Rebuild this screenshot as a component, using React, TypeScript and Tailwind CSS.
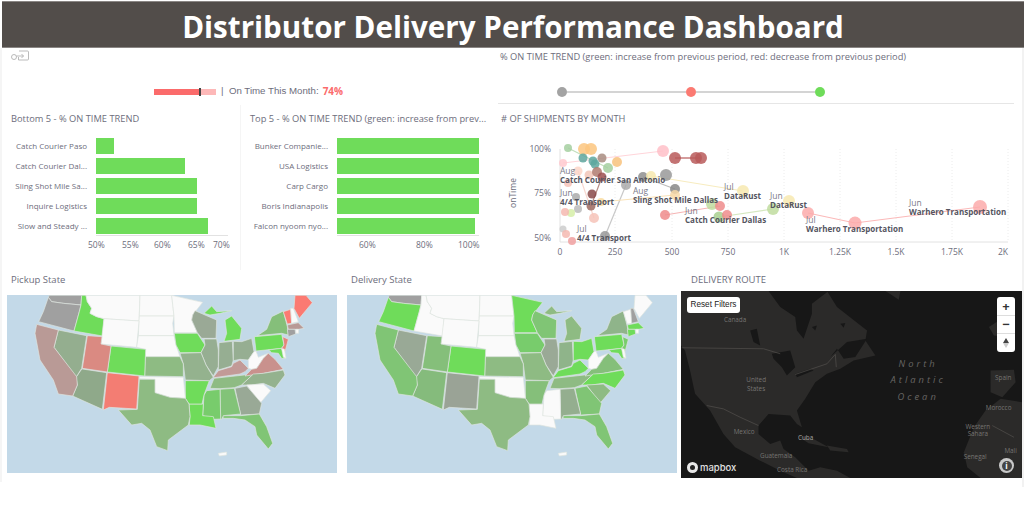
import React from "react";

const G = "#6fdc5a";
const W = "#fafafa";
const GRAY = "#a0a0a0";
const RED = "#fb7a72";

// outlines in a 990x532 space, same for both state maps
const STATES: Record<string, string> = {
  WA: "148,76 245,76 243,105 190,100 155,95 145,82",
  OR: "145,82 155,95 190,100 243,105 238,125 222,183 116,155 130,125",
  ID: "245,76 258,76 262,95 275,115 270,130 290,140 312,146 308,198 222,183 238,125 243,105",
  MT: "258,76 420,76 417,153 312,146 290,140 270,130 275,115 262,95",
  ND: "420,76 515,76 522,138 418,138",
  SD: "418,138 522,138 518,160 522,197 415,197 417,153",
  WY: "312,146 417,153 410,232 303,222",
  NE: "415,197 522,197 528,225 540,260 436,260 437,238 410,232",
  MN: "515,76 608,97 578,135 575,150 592,188 523,188 522,138",
  IA: "523,190 592,190 615,225 603,248 540,248 528,225",
  WI: "585,122 615,135 650,150 648,205 605,205 592,188 575,150 578,135",
  MIU: "612,130 635,108 650,125 695,122 660,130 630,135",
  MI: "675,150 695,138 725,175 720,208 672,214 680,190",
  IL: "612,207 650,207 655,240 655,290 640,318 618,285 603,248 615,225",
  IN: "657,218 697,214 700,270 695,288 655,300",
  OH: "700,214 725,215 755,205 762,245 745,270 720,268 700,272",
  KY: "640,322 655,302 695,290 700,280 720,270 745,295 735,305 720,312 642,323",
  TN: "630,355 642,325 760,312 725,345 703,353 660,356",
  WV: "745,295 745,270 762,245 768,243 775,262 805,250 790,265 770,295 755,298",
  VA: "735,318 755,298 770,295 790,265 805,250 825,268 850,298 790,310",
  NC: "725,345 760,312 790,310 850,300 855,315 825,355 790,340 755,345",
  SC: "740,345 790,342 812,362 780,400",
  GA: "705,355 740,348 785,400 778,432 722,435",
  FL: "668,437 722,437 778,432 800,470 818,520 805,537 770,495 765,470 735,450 700,445 670,445",
  AL: "660,358 703,355 722,432 670,437 665,448 662,447",
  MS: "620,362 660,358 662,447 640,448 608,437 612,375",
  LA: "567,402 610,402 608,437 640,440 648,475 600,465 568,465 570,440",
  AR: "556,332 628,332 612,375 606,402 567,402 556,385",
  MO: "540,250 603,248 618,285 640,322 628,332 556,330 550,282",
  KS: "436,260 540,260 550,282 550,320 434,318",
  OK: "418,320 550,322 556,385 510,382 465,368 465,328 418,326",
  TX: "418,328 465,328 465,368 510,382 556,385 567,402 570,440 565,465 505,510 503,542 470,530 450,480 425,460 395,465 355,420 412,418",
  NM: "322,308 417,318 410,417 328,412 310,420",
  AZ: "247,297 320,308 307,418 218,378 232,345 228,322 243,300",
  CO: "333,228 437,238 434,318 322,306",
  UT: "262,197 306,200 303,222 333,228 322,306 247,295",
  NV: "175,180 260,197 245,295 228,322 162,232",
  CA: "110,163 175,180 162,232 230,320 232,345 218,378 175,372 160,330 120,270 105,190",
  PA: "763,200 845,193 852,225 845,235 768,243",
  NY: "772,197 800,178 815,140 850,123 862,170 865,195 845,190",
  NJ: "848,200 865,208 855,245 845,235 852,225",
  MD: "806,240 845,235 855,265 845,265 835,250 815,248",
  DE: "845,236 853,237 858,265 850,262",
  VT: "850,125 872,118 875,160 862,162",
  NH: "872,115 880,115 895,155 875,160",
  ME: "885,76 918,76 937,98 898,145 882,115",
  MA: "862,165 895,158 912,175 895,178 865,178",
  CT: "862,178 885,178 887,192 865,200",
  RI: "887,178 896,178 896,190 888,190",
  PR: "655,550 680,546 680,555 658,558",
};

const PICKUP: Record<string, string> = {
  WA: GRAY, OR: GRAY, ID: G, MT: W, ND: W, SD: W, WY: W, NE: W, MN: W, IA: G, WI: "#9aa996", MIU: G, MI: G,
  IL: "#96ae92", IN: "#96ae92", OH: "#96ae92", KY: "#c29a97", TN: "#8ebb83", WV: W, VA: "#c9918d", NC: "#94b28e",
  SC: W, GA: "#99a996", FL: "#80c575", AL: "#82c378", MS: "#78cc6c", LA: G, AR: G, MO: "#94b28e", KS: "#8ebb83",
  OK: W, TX: "#8ebb83", NM: "#f37d73", AZ: "#8fa98a", CO: G, UT: "#da8a82", NV: "#94ae8f", CA: "#b99a96", PA: G,
  NY: "#85bf7a", NJ: "#e4857c", MD: G, DE: W, VT: RED, NH: W, ME: RED, MA: "#b89a96", CT: GRAY, RI: W, PR: W,
};

const DELIVERY: Record<string, string> = {
  WA: GRAY, OR: G, ID: W, MT: W, ND: W, SD: W, WY: W, NE: W, MN: G, IA: "#78cc6c", WI: "#80c575", MIU: "#8ebb83",
  MI: "#8ebb83", IL: "#9aa996", IN: "#8fb48a", OH: G, KY: G, TN: "#8ebb83", WV: W, VA: "#85bf7a", NC: G, SC: "#8ebb83",
  GA: "#80c575", FL: "#80c575", AL: "#94ae8f", MS: W, LA: W, AR: "#85bf7a", MO: "#8ebb83", KS: "#8ebb83", OK: W,
  TX: "#8ebb83", NM: "#9aa396", AZ: "#85bb7c", CO: G, UT: "#85bf7a", NV: "#99a996", CA: "#80c575", PA: G,
  NY: "#8fb48a", NJ: "#78cc6c", MD: G, DE: W, VT: W, NH: GRAY, ME: W, MA: G, CT: G, RI: W, PR: W,
};

const BOTTOM5 = [
  { name: "Catch Courier Paso", w: 17.5 },
  { name: "Catch Courier Dal...", w: 89 },
  { name: "Sling Shot Mile Sa...", w: 101 },
  { name: "Inquire Logistics", w: 101 },
  { name: "Slow and Steady ...", w: 112 },
];

const TOP5 = [
  { name: "Bunker Companie...", w: 142 },
  { name: "USA Logistics", w: 142 },
  { name: "Carp Cargo", w: 142 },
  { name: "Boris Indianapolis", w: 142 },
  { name: "Falcon nyoom nyo...", w: 138 },
];

// [x, y, r, fill]
const DOTS: [number, number, number, string][] = [
  [663, 151, 6, "#ffc0c8"], [563, 163, 4, "#ffc9cf"], [584, 149, 6, "#fbc67f"], [591, 149, 6, "#fbc67f"],
  [617, 162, 5, "#f8c27c"], [568, 148, 4, "#a5cfa0"], [578, 171, 4.5, "#fbd5c8"], [589, 175, 4.5, "#f2c5b8"],
  [568, 183, 4, "#f6c3b8"], [583, 158, 4.5, "#5ea79f"], [593, 161, 4.5, "#5ea79f"], [595, 164, 4.5, "#5ea79f"],
  [602, 158, 4.5, "#a88c80"], [608, 168, 5, "#a5cfa0"], [597, 172, 5, "#b07a6e"], [602, 177, 4.5, "#9c4f4f"],
  [592, 194, 4.5, "#8a4a4a"], [591, 206, 4.5, "#9c6a60"], [675, 158, 6, "#b85a5a"], [696, 158, 6, "#b85a5a"],
  [701, 158, 6, "#b85a5a"], [643, 177, 5, "#8f8f8f"], [666, 175, 6, "#999999"], [675, 189, 5, "#888888"],
  [626, 185, 5, "#aaaaaa"], [605, 236, 5, "#999999"], [576, 197, 4, "#aaaaaa"], [578, 209, 4, "#bbbbbb"],
  [563, 229, 3.5, "#cccccc"], [651, 176, 5, "#f7e9b0"], [675, 195, 5, "#f8d9a8"], [743, 191, 6, "#f7e9b0"],
  [601, 202, 4, "#f9dca0"], [712, 204, 6, "#bfdc9f"], [719, 217, 5.5, "#a8cf8e"], [571, 213, 4, "#d6efa8"],
  [665, 215, 5, "#ef8c8c"], [720, 206, 5, "#ef8c8c"], [727, 215, 5, "#ef8c8c"], [594, 218, 5, "#f6c3b8"],
  [565, 212, 4, "#f4b8b0"], [566, 234, 4, "#f4b8b0"], [572, 241, 4, "#f0a0a0"], [789, 201, 6, "#f7e9b0"],
  [773, 209, 6, "#bfdc9f"], [808, 213, 6, "#fbaaaa"], [855, 223, 6.5, "#fbaaaa"], [980, 207, 7, "#fbaaaa"],
];

const LINES: [string, string][] = [
  ["563,163 663,151", "#ffd5da"], ["675,158 701,158", "#b85a5a"], ["643,177 675,189", "#bbbbbb"],
  ["626,185 605,236", "#c8c8c8"], ["651,176 743,191", "#f7ecc0"], ["601,202 675,195", "#f9e2b8"],
  ["719,217 773,209", "#d5e8c0"], ["665,215 720,206", "#f5b5b5"], ["808,213 855,223 980,207", "#fbb9b9"],
  ["568,148 608,168", "#c0dfbc"], ["602,177 591,206", "#b88c84"], ["578,171 594,218", "#f8d8d0"],
];

const LABELS: [number, number, string, string][] = [
  [560, 174, "Aug", "Catch Courier San Antonio"],
  [560, 196, "Jun", "4/4 Transport"],
  [633, 194, "Aug", "Sling Shot Mile Dallas"],
  [577, 232, "Jul", "4/4 Transport"],
  [724, 190, "Jul", "DataRust"],
  [685, 214, "Jun", "Catch Courier Dallas"],
  [770, 199, "Jun", "DataRust"],
  [806, 223, "Jul", "Warhero Transportation"],
  [909, 206, "Jun", "Warhero Transportation"],
];

function UsMap({ colors }: { colors: Record<string, string> }) {
  return (
    <svg viewBox="21 76 990 532" className="block w-[330px] h-[178px] bg-[#c3d9e8]">
      {Object.keys(STATES).map((k) => (
        <polygon key={k} points={STATES[k]} fill={colors[k]} stroke="#dfe6df" strokeWidth="2" strokeLinejoin="round" />
      ))}
    </svg>
  );
}

function BarChart({ rows, ticks }: { rows: { name: string; w: number }[]; ticks: React.ReactNode }) {
  return (
    <div className="flex flex-col mt-[12px]">
      <div className="flex flex-col gap-[4.5px]">
        {rows.map((r) => (
          <div key={r.name} className="flex items-center h-[15.5px]">
            <div className="w-[96px] text-right text-[8px] text-[#6d6d7c] whitespace-nowrap pr-[9px]">{r.name}</div>
            <div className="h-full bg-[#6fdc5a]" style={{ width: r.w }} />
          </div>
        ))}
      </div>
      {ticks}
    </div>
  );
}

function MapboxMap() {
  return (
    <svg viewBox="3 62 1021 560" className="block w-[341px] h-[187px] bg-[#171717]">
      <g fill="#2b2a29">
        <polygon points="3,62 440,62 470,110 560,180 555,210 585,255 520,270 480,295 440,310 405,335 375,385 350,420 365,470 350,460 330,435 265,430 235,465 235,490 270,520 300,510 310,535 345,560 385,600 420,590 470,600 510,622 350,622 300,600 240,570 165,530 130,490 90,420 45,370 30,300 15,240 3,225" />
        <polygon points="615,62 660,62 655,88 635,75" />
        <polygon points="350,495 400,505 445,530 385,518" />
        <polygon points="440,525 500,535 505,545 450,540" />
        <polygon points="930,300 1000,298 1005,335 965,380 930,365" />
        <polygon points="1024,395 960,385 915,420 880,470 850,545 860,590 900,622 1024,622" />
        <polygon points="925,170 955,150 975,200 940,195" />
      </g>
      <g fill="#171717">
        <polygon points="265,62 445,62 395,100 395,130 370,205 350,180 345,140 300,110" />
        <polygon points="275,250 330,240 345,290 320,315 305,290 280,265" />
        <polygon points="345,310 390,295 400,300 350,320" />
        <polygon points="450,260 500,215 560,205 525,260 490,265 470,235" />
        <polygon points="210,180 230,175 240,225 220,215" />
        <polygon points="395,170 410,165 405,180" />
        <polygon points="480,160 495,158 490,172" />
      </g>
      <g fill="none" stroke="#55524f" strokeWidth="2">
        <polyline points="5,232 250,235 300,250" />
        <polyline points="345,312 440,280 465,252 468,290" />
        <polyline points="80,405 130,415 180,440 235,465" />
        <polyline points="935,465 1000,500" />
      </g>
      <g fill="#777573" fontSize="19" textAnchor="middle" style={{ fontFamily: '"Open Sans", sans-serif' }}>
        <text x="165" y="156">Canada</text>
        <text x="228" y="334">United</text>
        <text x="228" y="361">States</text>
        <text x="192" y="491">Mexico</text>
        <text x="288" y="561">Guatemala</text>
        <text x="336" y="604">Costa Rica</text>
        <text x="376" y="509" fill="#a5a3a1">Cuba</text>
        <text x="968" y="328">Spain</text>
        <text x="954" y="417">Morocco</text>
        <text x="892" y="475">Western</text>
        <text x="892" y="497">Sahara</text>
        <text x="884" y="566">Senegal</text>
        <text x="990" y="547">Mali</text>
      </g>
      <g fill="#686664" fontSize="28" fontStyle="italic" textAnchor="middle" letterSpacing="9" style={{ fontFamily: '"Open Sans", sans-serif' }}>
        <text x="713" y="291">North</text>
        <text x="713" y="339">Atlantic</text>
        <text x="713" y="387">Ocean</text>
      </g>
    </svg>
  );
}

export default function App() {
  return (
    <div className="relative w-[1024px] h-[527px] overflow-hidden bg-white font-['Open_Sans',sans-serif] text-[#6d6d7c]">
      <div className="ml-[2px] mt-[1px] h-[47px] bg-[#524d4a] border-y border-[#8a8684] flex items-center justify-center">
        <h1 className="text-[29.6px] font-bold text-white leading-none pt-[4px]">
          Distributor Delivery Performance Dashboard
        </h1>
      </div>

      {/* top row */}
      <div className="flex h-[57px]">
        <div className="w-[495px] flex flex-col pl-[11px] pt-[2px]">
          <svg viewBox="0 0 18 11" className="w-[18px] h-[11px]" fill="none" stroke="#a9a9a9" strokeWidth="0.8">
            <circle cx="3" cy="7" r="2.5" />
            <path d="M8 1 h8.5 a1 1 0 0 1 1 1 v7 a1 1 0 0 1 -1 1 h-9 v-3 M5.5 6 h7 M10.5 4 l2 2 -2 2" />
          </svg>
          <div className="flex items-center mt-[23px] ml-[143px]">
            <div className="relative w-[62px] h-[6px] bg-[#fdb8b8]">
              <div className="h-full w-[46px] bg-[#fb6b6b]" />
              <div className="absolute left-[45px] top-[-1px] w-[1.5px] h-[8px] bg-[#444]" />
            </div>
            <span className="ml-[5px] text-[9.7px] font-['Liberation_Sans',sans-serif] whitespace-nowrap">|&nbsp; On Time This Month:</span>
            <span className="ml-[4px] text-[10px] font-bold text-[#fb6b6b]">74%</span>
          </div>
        </div>
        <div className="flex-1 pl-[6px]">
          <div className="text-[9.3px] leading-[14px] mt-[2px] ml-[-1px] whitespace-nowrap">
            % ON TIME TREND (green: increase from previous period, red: decrease from previous period)
          </div>
          <div className="flex items-center ml-[56px] mt-[23px] w-[268px]">
            <div className="w-[10px] h-[10px] rounded-full bg-[#a3a3a3] shrink-0" />
            <div className="flex-1 h-[2px] bg-[#d4d4d4]" />
            <div className="w-[10px] h-[10px] rounded-full bg-[#fb7a72] shrink-0" />
            <div className="flex-1 h-[2px] bg-[#d4d4d4]" />
            <div className="w-[10px] h-[10px] rounded-full bg-[#6fdc5a] shrink-0" />
          </div>
          <div className="w-[516px] h-px bg-[#e6e6e6] mt-[6px] ml-[-3px]" />
        </div>
      </div>

      {/* charts row */}
      <div className="flex h-[165px]">
        <div className="w-[241px] shrink-0 border-r border-[#f5f5f5]">
          <div className="text-[9.3px] leading-[14px] mt-[7px] pl-[11px] whitespace-nowrap">Bottom 5 - % ON TIME TREND</div>
          <BarChart
            rows={BOTTOM5}
            ticks={
              <div className="relative ml-[96px] w-[132px] h-[16px] border-t border-[#e2e2e2] mt-[1px] text-[8.5px]">
                <span className="absolute left-[-8px] top-[3px]">50%</span>
                <span className="absolute left-[26px] top-[3px]">55%</span>
                <span className="absolute left-[58px] top-[3px]">60%</span>
                <span className="absolute left-[92px] top-[3px]">65%</span>
                <span className="absolute left-[117px] top-[3px]">70%</span>
              </div>
            }
          />
        </div>
        <div className="w-[254px] shrink-0">
          <div className="text-[9.3px] leading-[14px] mt-[7px] pl-[9px] whitespace-nowrap">Top 5 - % ON TIME TREND (green: increase from prev...</div>
          <BarChart
            rows={TOP5}
            ticks={
              <div className="relative ml-[96px] w-[142px] h-[16px] border-t border-[#e2e2e2] mt-[1px] text-[8.5px]">
                <span className="absolute left-[22px] top-[3px]">60%</span>
                <span className="absolute left-[79px] top-[3px]">80%</span>
                <span className="absolute left-[121px] top-[3px]">100%</span>
              </div>
            }
          />
        </div>
        <div className="flex-1 pl-[6px]">
          <div className="text-[9.3px] leading-[14px] mt-[7px] whitespace-nowrap">
            # OF SHIPMENTS BY MONTH
          </div>
          <svg viewBox="495 126 529 134" className="block ml-[-6px] w-[529px] h-[134px]" style={{ fontFamily: '"Open Sans", sans-serif' }}>
            {[615, 672, 728, 784, 840, 896, 952, 1008].map((x) => (
              <line key={x} x1={x} x2={x} y1="149" y2="242" stroke="#ececec" strokeDasharray="1 2" />
            ))}
            <polyline points="560,149 560,242 1008,242" fill="none" stroke="#e2e2e2" />
            {LINES.map(([p, c]) => (
              <polyline key={p} points={p} fill="none" stroke={c} strokeWidth="1.2" />
            ))}
            {DOTS.map(([x, y, r, f], i) => (
              <circle key={i} cx={x} cy={y} r={r} fill={f} fillOpacity="0.85" />
            ))}
            {LABELS.map(([x, y, a, b]) => (
              <g key={`${x}-${b}`}>
                <text x={x} y={y} fontSize="8.5" fill="#7b7b8a">{a}</text>
                <text x={x} y={y + 8.5} fontSize="8" fontWeight="700" fill="#55555f">{b}</text>
              </g>
            ))}
            <g fontSize="8.5" fill="#6d6d7c" textAnchor="end">
              <text x="551" y="152">100%</text>
              <text x="551" y="196">75%</text>
              <text x="551" y="241">50%</text>
            </g>
            <text transform="translate(516 193) rotate(-90)" fontSize="8.5" fill="#6d6d7c" textAnchor="middle">onTime</text>
            <g fontSize="8.5" fill="#6d6d7c" textAnchor="middle">
              <text x="560" y="255">0</text>
              <text x="615" y="255">250</text>
              <text x="672" y="255">500</text>
              <text x="728" y="255">750</text>
              <text x="784" y="255">1K</text>
              <text x="840" y="255">1.25K</text>
              <text x="896" y="255">1.5K</text>
              <text x="952" y="255">1.75K</text>
              <text x="1003" y="255">2K</text>
            </g>
          </svg>
        </div>
      </div>

      {/* maps row */}
      <div className="flex">
        <div className="w-[340px] pl-[7px] shrink-0">
          <div className="text-[9.5px] leading-[14px] ml-[4px] mt-[3px] mb-[8px]">Pickup State</div>
          <UsMap colors={PICKUP} />
        </div>
        <div className="w-[340px] pl-[7px] shrink-0">
          <div className="text-[9.5px] leading-[14px] ml-[4px] mt-[3px] mb-[8px]">Delivery State</div>
          <UsMap colors={DELIVERY} />
        </div>
        <div className="flex-1 pl-[1px]">
          <div className="text-[9.5px] leading-[14px] ml-[10px] mt-[3px] mb-[4px]">DELIVERY ROUTE</div>
          <div className="relative w-[340px]">
            <MapboxMap />
            <button className="absolute left-[6px] top-[6px] h-[16px] w-[53px] rounded-[3px] bg-white text-[8.2px] text-[#222] font-['Liberation_Sans',sans-serif]">
              Reset Filters
            </button>
            <div className="absolute left-[316px] top-[6px] w-[18px] h-[55px] rounded-[3px] bg-white flex flex-col items-center text-[#333] divide-y divide-[#ddd]">
              <div className="h-[19px] w-full text-center text-[13px] leading-[18px] font-bold">+</div>
              <div className="h-[18px] w-full text-center text-[13px] leading-[16px] font-bold">−</div>
              <div className="h-[18px] w-full flex flex-col items-center justify-center">
                <div className="w-0 h-0 border-x-[3px] border-x-transparent border-b-[5px] border-b-[#444]" />
                <div className="w-0 h-0 border-x-[3px] border-x-transparent border-t-[5px] border-t-[#ccc]" />
              </div>
            </div>
            <div className="absolute left-[6px] bottom-[5px] flex items-center gap-[2px]">
              <div className="w-[11px] h-[11px] rounded-full bg-[#e8e8e8] flex items-center justify-center">
                <div className="w-[5px] h-[5px] rounded-full bg-[#222]" />
              </div>
              <span className="text-[9.5px] leading-none font-medium text-[#e0e0e0] font-['Inter',sans-serif]">mapbox</span>
            </div>
            <div className="absolute right-[7px] bottom-[5px] w-[15px] h-[15px] rounded-full bg-[#c9c9c9] flex items-center justify-center">
              <div className="w-[10px] h-[10px] rounded-full bg-[#444] text-[8px] leading-[10px] text-center font-bold text-white">i</div>
            </div>
          </div>
        </div>
      </div>

      {/* page edge strips */}
      <div className="absolute left-0 top-[48px] bottom-[45px] w-[2px] bg-[#f5f5f5]" />
      <div className="absolute right-0 top-[48px] bottom-[40px] w-[2px] bg-[#f2f2f2]" />
    </div>
  );
}
